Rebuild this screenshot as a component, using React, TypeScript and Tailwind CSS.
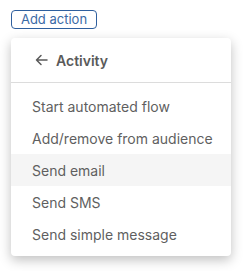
import React from "react";

const items = [
  "Start automated flow",
  "Add/remove from audience",
  "Send email",
  "Send SMS",
  "Send simple message",
];

export default function App() {
  return (
    <div
      className="w-[243px] h-[271px] bg-white pl-[11px] pt-[10px]"
      style={{ fontFamily: "Inter, 'Noto Sans', sans-serif" }}
    >
      <button className="h-[19px] w-[86px] rounded-[4px] border border-[#2e5f9e] text-[13px] leading-none text-[#3b6aa6] flex items-center justify-center">
        Add action
      </button>
      <div className="mt-[9px] w-[220px] rounded-[4px] bg-white shadow-[0_4px_12px_rgba(0,0,0,0.25)]">
        <div className="h-[45px] flex items-center pl-[24px] border-b border-[#dcdcdc] text-[#5a5a5a]">
          <svg width="13" height="12" viewBox="0 0 13 12" fill="none" stroke="currentColor" strokeWidth="1.5" strokeLinecap="round" strokeLinejoin="round">
            <path d="M12 6H1.5M6 1.5 1.5 6 6 10.5" />
          </svg>
          <span className="ml-[8px] text-[14px] font-semibold">Activity</span>
        </div>
        <div className="pt-[7px] pb-[6px]">
          {items.map((it) => (
            <div
              key={it}
              className={`h-[32px] flex items-center pl-[21px] text-[14px] text-[#5f5f5f] ${it === "Send email" ? "bg-[#f5f5f5]" : ""}`}
            >
              {it}
            </div>
          ))}
        </div>
      </div>
    </div>
  );
}
